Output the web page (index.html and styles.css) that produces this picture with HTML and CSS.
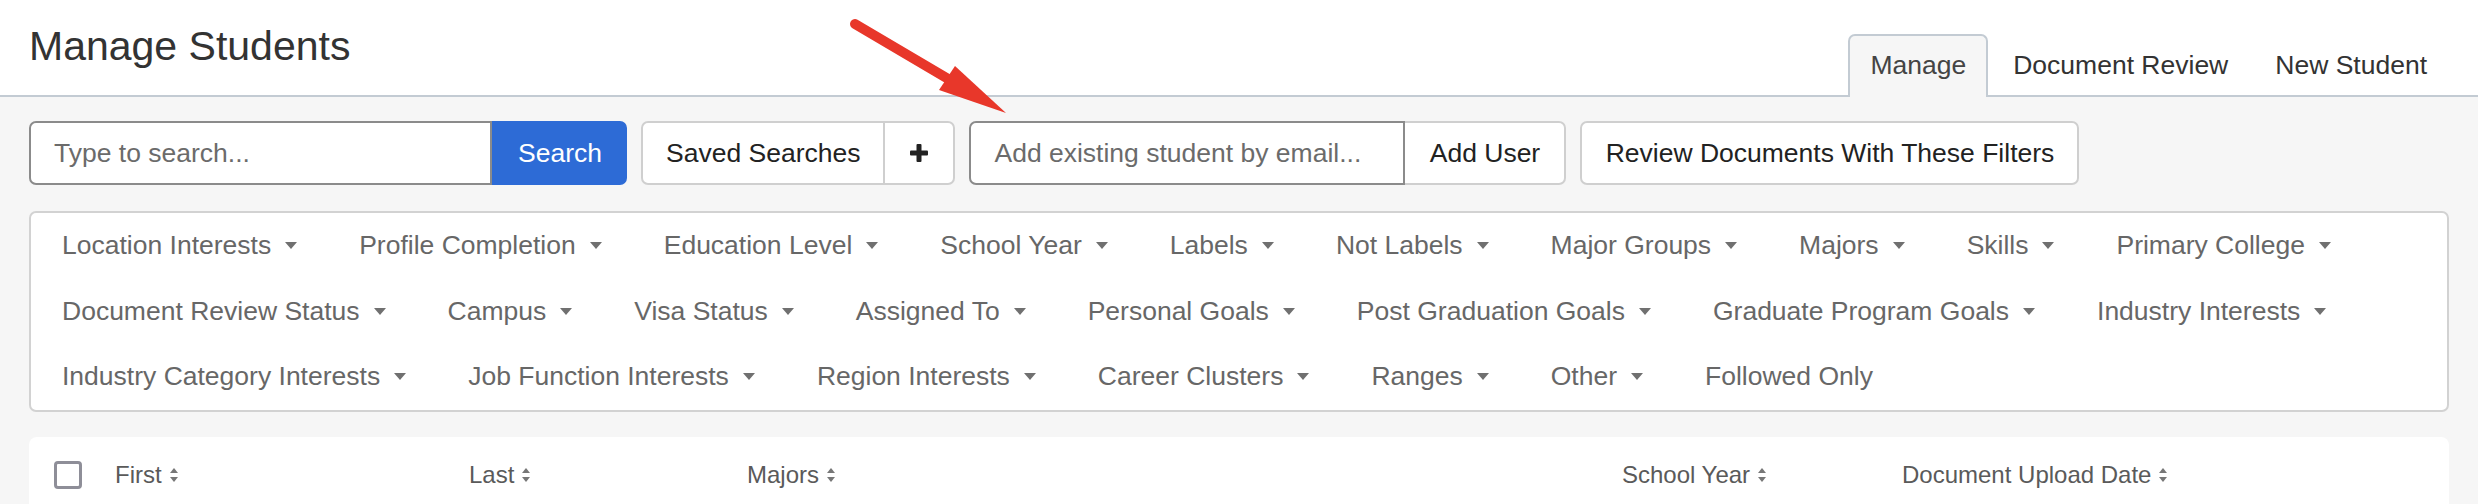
FILE: index.html
```html
<!DOCTYPE html>
<html lang="en">
<head>
<meta charset="utf-8">
<title>Manage Students</title>
<link rel="stylesheet" href="styles.css">
</head>
<body>
<header class="page-header">
  <h1 class="page-title">Manage Students</h1>
  <nav class="tabs">
    <a class="tab active">Manage</a>
    <a class="tab">Document Review</a>
    <a class="tab">New Student</a>
  </nav>
</header>

<svg class="callout-arrow" width="200" height="130" viewBox="840 0 200 130" aria-hidden="true">
  <line x1="855" y1="24" x2="950" y2="80" stroke="#e8372a" stroke-width="10" stroke-linecap="round"/>
  <polygon points="955,66 939,90 1006,113" fill="#e8372a"/>
</svg>

<main class="content">
  <div class="toolbar">
    <div class="group">
      <div class="input search-input">Type to search...</div>
      <button class="btn btn-primary">Search</button>
    </div>
    <div class="group">
      <button class="btn btn-default">Saved Searches</button>
      <button class="btn btn-default btn-icon" aria-label="Add">
        <svg width="20" height="20" viewBox="0 0 20 20"><rect x="7.5" y="1" width="5" height="18" rx="1" fill="#222"/><rect x="1" y="7.5" width="18" height="5" rx="1" fill="#222"/></svg>
      </button>
    </div>
    <div class="group">
      <div class="input email-input">Add existing student by email...</div>
      <button class="btn btn-default btn-attached">Add User</button>
    </div>
    <button class="btn btn-default btn-single">Review Documents With These Filters</button>
  </div>

  <div class="filters">
    <span class="filter">Location Interests<i class="caret"></i></span>
    <span class="filter">Profile Completion<i class="caret"></i></span>
    <span class="filter">Education Level<i class="caret"></i></span>
    <span class="filter">School Year<i class="caret"></i></span>
    <span class="filter">Labels<i class="caret"></i></span>
    <span class="filter">Not Labels<i class="caret"></i></span>
    <span class="filter">Major Groups<i class="caret"></i></span>
    <span class="filter">Majors<i class="caret"></i></span>
    <span class="filter">Skills<i class="caret"></i></span>
    <span class="filter">Primary College<i class="caret"></i></span>
    <span class="filter">Document Review Status<i class="caret"></i></span>
    <span class="filter">Campus<i class="caret"></i></span>
    <span class="filter">Visa Status<i class="caret"></i></span>
    <span class="filter">Assigned To<i class="caret"></i></span>
    <span class="filter">Personal Goals<i class="caret"></i></span>
    <span class="filter">Post Graduation Goals<i class="caret"></i></span>
    <span class="filter">Graduate Program Goals<i class="caret"></i></span>
    <span class="filter">Industry Interests<i class="caret"></i></span>
    <span class="filter">Industry Category Interests<i class="caret"></i></span>
    <span class="filter">Job Function Interests<i class="caret"></i></span>
    <span class="filter">Region Interests<i class="caret"></i></span>
    <span class="filter">Career Clusters<i class="caret"></i></span>
    <span class="filter">Ranges<i class="caret"></i></span>
    <span class="filter">Other<i class="caret"></i></span>
    <span class="filter">Followed Only</span>
  </div>

  <section class="table-card">
    <div class="table-head">
      <span class="cell"><span class="checkbox"></span></span>
      <span class="cell">First<i class="sort"></i></span>
      <span class="cell">Last<i class="sort"></i></span>
      <span class="cell">Majors<i class="sort"></i></span>
      <span class="cell">School Year<i class="sort"></i></span>
      <span class="cell">Document Upload Date<i class="sort"></i></span>
    </div>
  </section>
</main>
</body>
</html>
```

FILE: styles.css
```css
* { box-sizing: border-box; }

html, body {
  margin: 0;
  padding: 0;
}

body {
  font-family: "Liberation Sans", Arial, sans-serif;
  background: #f6f6f6;
  color: #222;
  position: relative;
  min-height: 504px;
}

.page-header {
  background: #ffffff;
  height: 97px;
  border-bottom: 2px solid #c3cbd3;
  display: flex;
  justify-content: space-between;
  padding: 0 29px;
}

.page-title {
  margin: 22px 0 0 0;
  font-size: 41px;
  line-height: 49px;
  font-weight: 400;
  color: #333;
  align-self: flex-start;
}

.tabs {
  display: flex;
  gap: 3px;
  align-self: flex-end;
  margin-bottom: -2px;
}

.tab {
  display: block;
  font-size: 26.5px;
  line-height: 58px;
  padding: 0 20px 3px;
  color: #333;
  border: 2px solid transparent;
  border-bottom: 0;
  border-radius: 7px 7px 0 0;
}

.tab.active {
  background: #f6f6f6;
  border-color: #c3cbd3;
  color: #444;
}

.callout-arrow {
  position: absolute;
  left: 840px;
  top: 0;
  z-index: 5;
}

.content {
  padding: 24px 29px 0;
}

.toolbar {
  display: flex;
  gap: 14px;
  height: 64px;
}

.group {
  display: flex;
}

.input {
  background: #fff;
  border: 2px solid #8b8b8b;
  border-radius: 7px 0 0 7px;
  font-size: 26.5px;
  line-height: 60px;
  color: #6b6b6b;
  padding: 0 23px;
}

.search-input { width: 463px; }
.email-input { width: 436px; }

.btn {
  font-family: inherit;
  font-size: 26.5px;
  height: 64px;
  padding: 0 23px;
  margin: 0;
  background: #fff;
  color: #222;
  border: 2px solid #cfcfcf;
  cursor: pointer;
}

.btn-primary {
  background: #2d6bd6;
  border-color: #2d6bd6;
  color: #fff;
  border-radius: 0 7px 7px 0;
  padding: 0 24px;
  width: 135px;
}

.group .btn-default:first-child {
  border-radius: 7px 0 0 7px;
}

.btn-icon {
  border-left: 0;
  border-radius: 0 7px 7px 0;
  width: 70px;
  padding: 0;
  display: flex;
  align-items: center;
  justify-content: center;
}

.btn-attached {
  border-left: 0;
  border-radius: 0 7px 7px 0;
  width: 161px;
  padding: 0;
}

.btn-single {
  border-radius: 7px;
  width: 499px;
  padding: 0;
}

.filters {
  margin-top: 26px;
  background: #fff;
  border: 2px solid #d2d2d2;
  border-radius: 7px;
  display: flex;
  flex-wrap: wrap;
  width: 2420px;
}

.filter {
  font-size: 26.5px;
  line-height: 65.5px;
  padding: 0 31px;
  color: #676767;
  white-space: nowrap;
}

.caret {
  display: inline-block;
  width: 0;
  height: 0;
  margin-left: 14px;
  border-left: 6px solid transparent;
  border-right: 6px solid transparent;
  border-top: 7px solid #707070;
  vertical-align: 5px;
}

.table-card {
  margin-top: 25px;
  width: 2420px;
  height: 120px;
  background: #fff;
  border-radius: 8px 8px 0 0;
  padding: 0 0 0 25px;
}

.table-head {
  display: grid;
  grid-template-columns: 61px 354px 278px 875px 280px 1fr;
  align-items: center;
  height: 76px;
  font-size: 24px;
  color: #5a5a5a;
}

.cell {
  display: flex;
  align-items: center;
  white-space: nowrap;
}

.checkbox {
  display: block;
  width: 28px;
  height: 28px;
  border: 3px solid #8e8e98;
  border-radius: 4px;
  background: #fff;
}

.sort {
  display: inline-block;
  position: relative;
  width: 8px;
  height: 16px;
  margin-left: 8px;
}

.sort::before,
.sort::after {
  content: "";
  position: absolute;
  left: 0;
  border-left: 4px solid transparent;
  border-right: 4px solid transparent;
}

.sort::before {
  top: 1px;
  border-bottom: 5px solid #777;
}

.sort::after {
  bottom: 1px;
  border-top: 5px solid #777;
}
```
